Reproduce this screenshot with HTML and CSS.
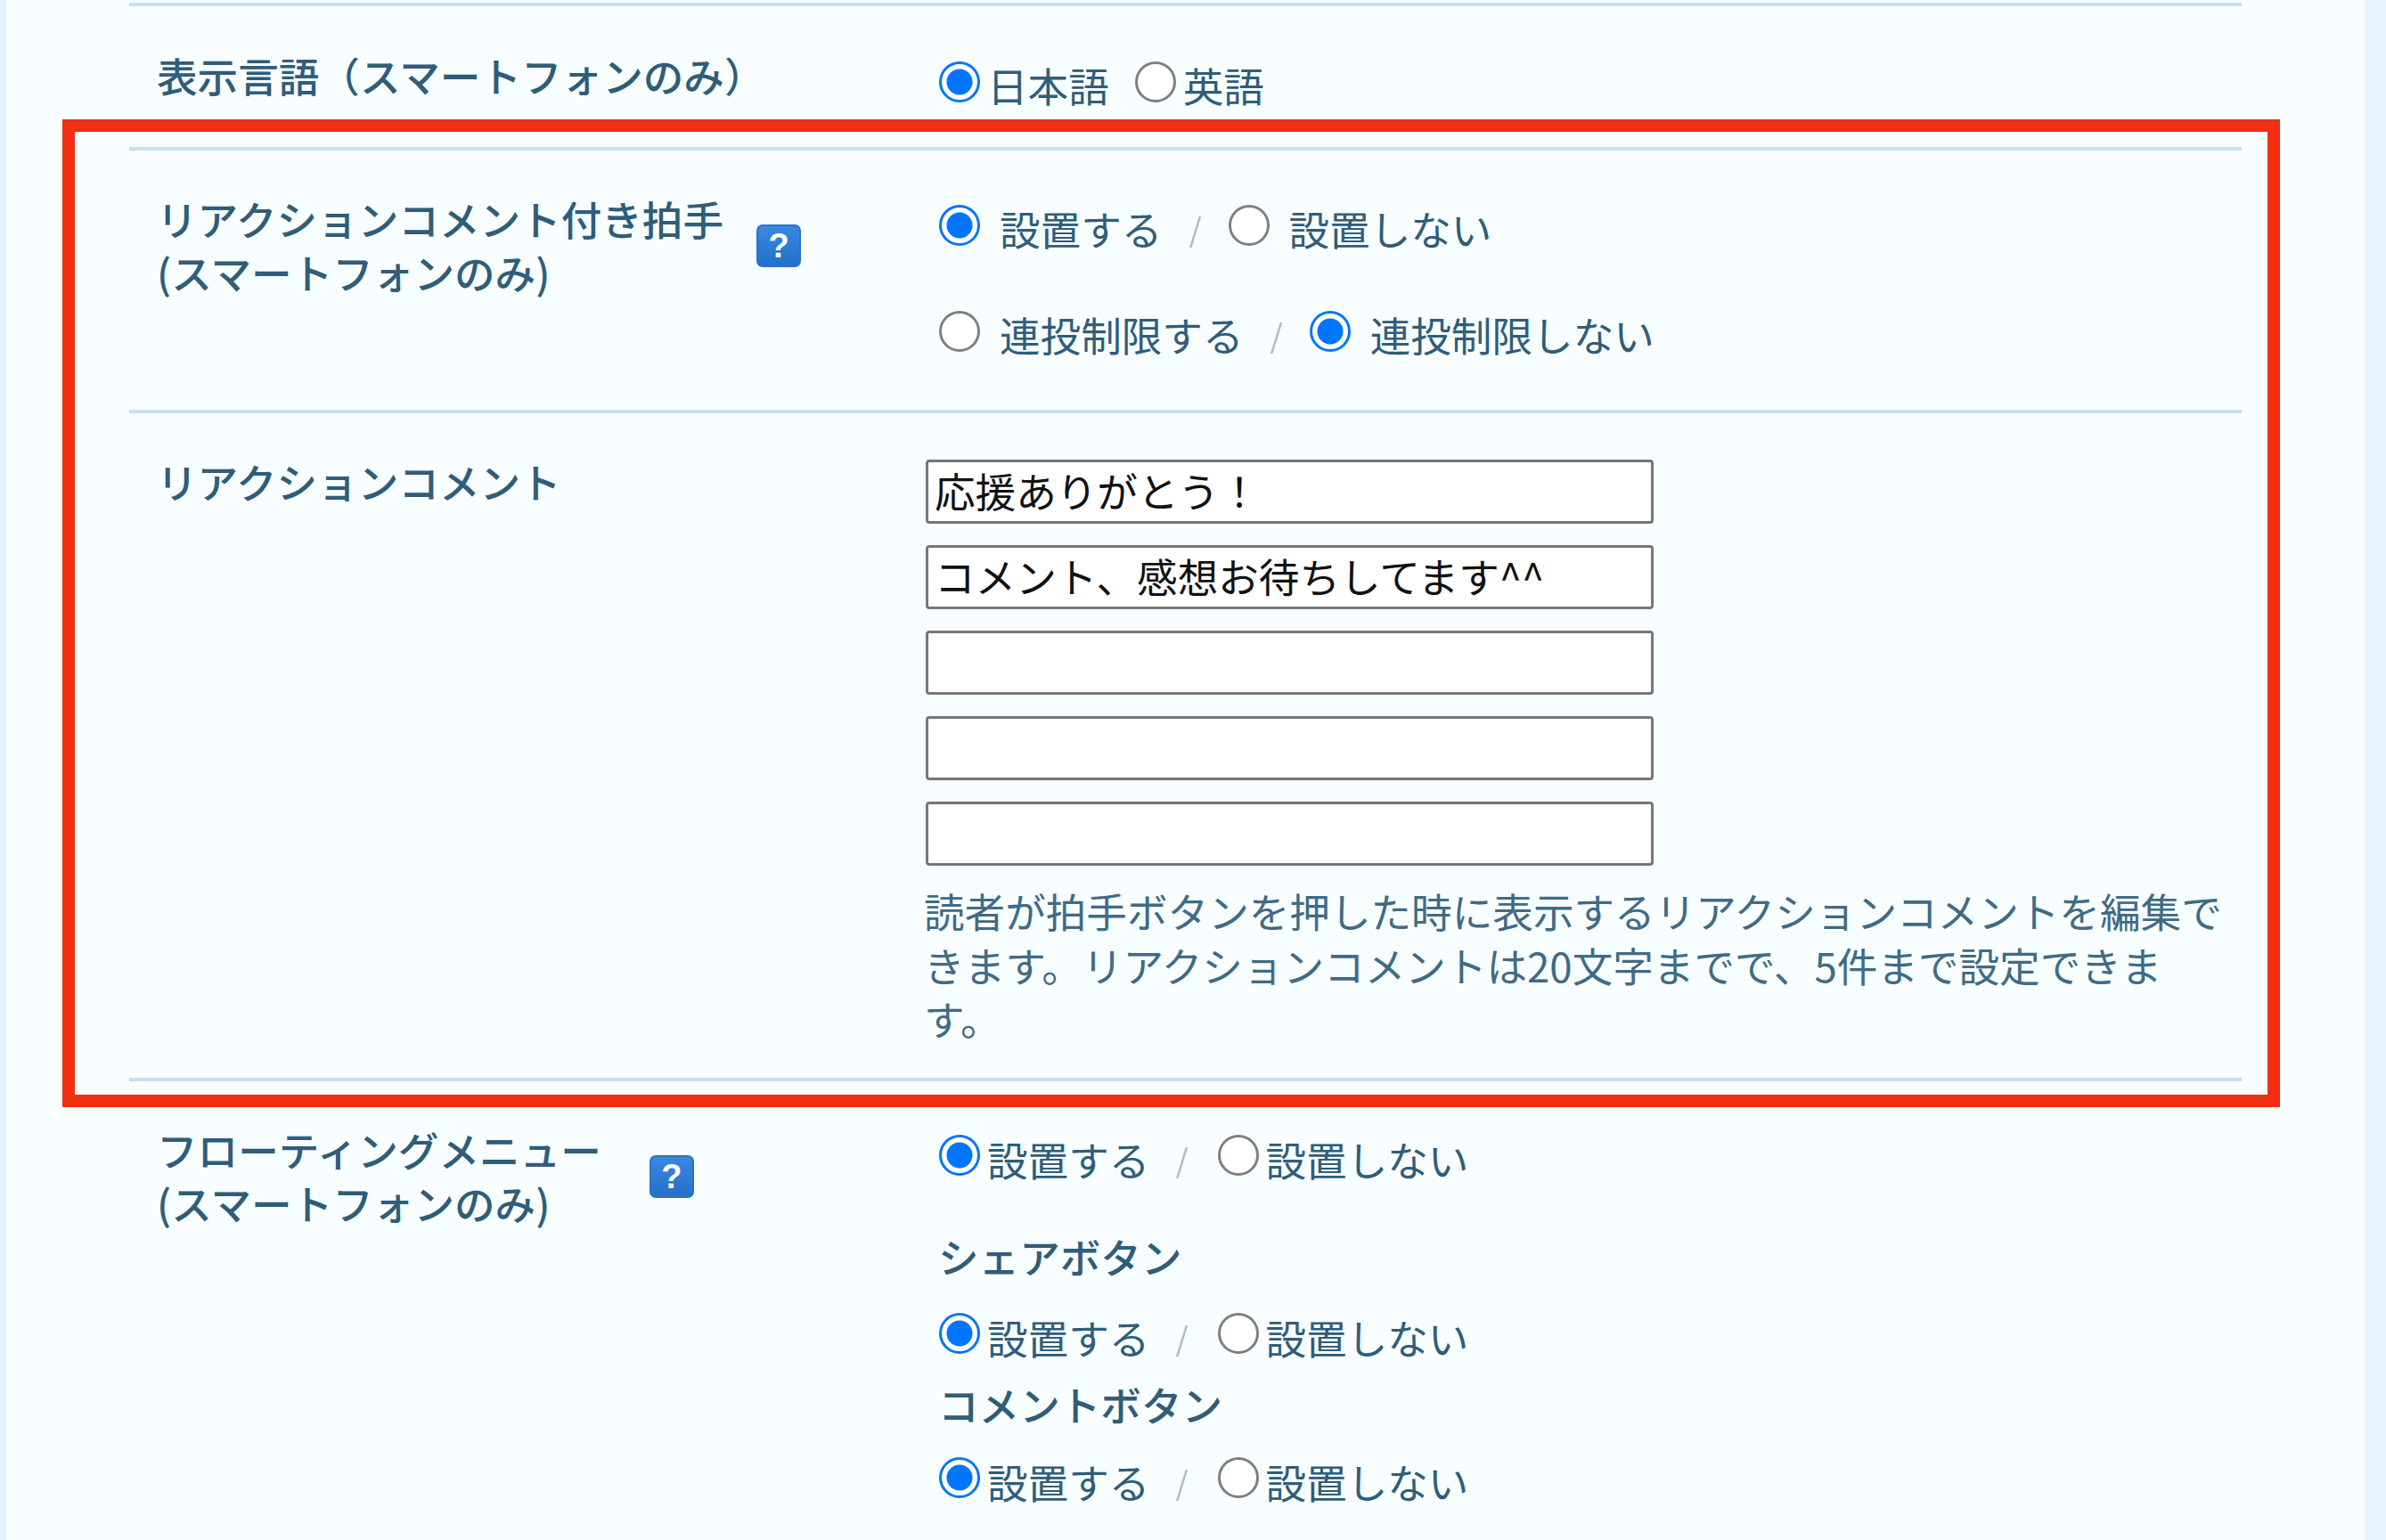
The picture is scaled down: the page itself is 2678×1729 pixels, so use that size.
FILE: index.html
```html
<!DOCTYPE html>
<html lang="ja">

<head>
    <meta charset="UTF-8">
    <title>設定</title>
    <link rel="stylesheet" href="styles.css">
</head>

<body>
    <main class="settings">
        <section class="row row-language">
            <div class="row-label"><span>表示言語（スマートフォンのみ）</span></div>
            <div class="row-options">
                <div class="choice-line">
                    <label class="choice"><input type="radio" name="lang" checked>日本語</label>
                    <label class="choice choice-next"><input type="radio" name="lang">英語</label>
                </div>
            </div>
        </section>

        <section class="row row-reaction">
            <div class="row-label">
                <span>リアクションコメント付き拍手<br>(スマートフォンのみ)</span>
                <span class="help-badge">?</span>
            </div>
            <div class="row-options">
                <div class="choice-line wide">
                    <label class="choice"><input type="radio" name="clap" checked>設置する</label>
                    <span class="slash">/</span>
                    <label class="choice"><input type="radio" name="clap">設置しない</label>
                </div>
                <div class="choice-line wide second">
                    <label class="choice"><input type="radio" name="limit">連投制限する</label>
                    <span class="slash">/</span>
                    <label class="choice"><input type="radio" name="limit" checked>連投制限しない</label>
                </div>
            </div>
        </section>

        <section class="row row-comments">
            <div class="row-label"><span>リアクションコメント</span></div>
            <div class="row-fields">
                <input class="comment-input" type="text" value="応援ありがとう！">
                <input class="comment-input" type="text" value="コメント、感想お待ちしてます^^">
                <input class="comment-input" type="text">
                <input class="comment-input" type="text">
                <input class="comment-input" type="text">
                <p class="help-text">読者が拍手ボタンを押した時に表示するリアクションコメントを編集で<br>きます。リアクションコメントは20文字までで、5件まで設定できま<br>す。</p>
            </div>
        </section>

        <section class="row row-floating">
            <div class="row-label">
                <span>フローティングメニュー<br>(スマートフォンのみ)</span>
                <span class="help-badge">?</span>
            </div>
            <div class="row-options">
                <div class="choice-line">
                    <label class="choice"><input type="radio" name="menu" checked>設置する</label>
                    <span class="slash">/</span>
                    <label class="choice"><input type="radio" name="menu">設置しない</label>
                </div>
                <h4 class="sub-title share-title">シェアボタン</h4>
                <div class="choice-line share-line">
                    <label class="choice"><input type="radio" name="share" checked>設置する</label>
                    <span class="slash">/</span>
                    <label class="choice"><input type="radio" name="share">設置しない</label>
                </div>
                <h4 class="sub-title comment-title">コメントボタン</h4>
                <div class="choice-line comment-line">
                    <label class="choice"><input type="radio" name="comment" checked>設置する</label>
                    <span class="slash">/</span>
                    <label class="choice"><input type="radio" name="comment">設置しない</label>
                </div>
            </div>
        </section>

        <!-- Red highlight over the reaction rows -->
        <div class="highlight"></div>
    </main>
</body>

</html>
```

FILE: styles.css
```css
/* Reset styles */

* {
    margin: 0;
    padding: 0;
    box-sizing: border-box;
}

html,
body {
    height: 100%;
    overflow: hidden;
}

/* Body styling */

body {
    font-family: "Noto Sans CJK JP", "Noto Sans", sans-serif;
    font-size: 45.6px;
    line-height: 60px;
    background-color: #e5f4fd;
    color: #2f5d7a;
}

/* Settings panel */

.settings {
    position: relative;
    height: 100%;
    margin: 0 24px 0 7px;
    padding: 3px 138px 0 138px;
    background-color: #f8fdff;
}

.row {
    display: flex;
    border-top: 4px solid #c5dff0;
}

.row-label {
    display: flex;
    align-items: center;
    align-self: flex-start;
    width: 894px;
    padding-left: 31px;
    padding-top: 46px;
    font-weight: 500;
}

.row-options {
    padding-left: 15px;
}

/* Row heights */

.row-language {
    height: 162px;
}

.row-language .row-label {
    padding-top: 47px;
}

.row-language .row-options {
    padding-top: 58px;
}

.row-language .choice input {
    margin-bottom: 6px;
}

.row-reaction {
    height: 295px;
}

.row-reaction .row-options {
    padding-top: 57px;
}

.row-reaction .choice input {
    margin-bottom: 6px;
}

.row-comments {
    height: 750px;
}

.row-floating .row-options {
    padding-top: 57px;
}

/* Radio lines */

.choice-line {
    display: flex;
    align-items: center;
    height: 60px;
}

.choice {
    display: flex;
    align-items: center;
    gap: 8px;
}

.choice input {
    appearance: none;
    flex: none;
    width: 46px;
    height: 46px;
    margin: 0 0 8px;
    border: 3px solid #7f7f7f;
    border-radius: 50%;
    background: #fff;
}

.choice input:checked {
    border-color: #0075ff;
    background: radial-gradient(circle closest-side, #0075ff 14px, #fff 15px);
}

.choice-next {
    margin-left: 29px;
}

.wide .choice {
    gap: 22px;
}

.second {
    margin-top: 59px;
}

.slash {
    margin: 0 33px 0 29px;
    font-size: 36px;
    color: #a9bcc8;
}

.wide .slash {
    margin: 0 30px;
}

/* Help badge */

.help-badge {
    display: flex;
    align-items: center;
    justify-content: center;
    width: 50px;
    height: 48px;
    margin-left: 37px;
    margin-top: 2px;
    border: 2px solid #2a72c8;
    border-radius: 7px;
    background: linear-gradient(#3a88e0, #2470cc);
    font-family: "Liberation Sans", sans-serif;
    font-size: 38px;
    font-weight: bold;
    line-height: 1;
    color: #fff;
}

.row-floating .help-badge {
    margin-left: 54px;
}

/* Comment inputs */

.row-fields {
    width: 1477px;
    padding-top: 52px;
}

.comment-input {
    display: block;
    width: 817px;
    height: 72px;
    margin-bottom: 24px;
    padding: 0 7px 4px;
    border: 3px solid #767676;
    border-radius: 4px;
    background: #fff;
    font-family: inherit;
    font-size: 45.6px;
    color: #111;
}

.help-text {
    margin: -4px 0 0 -2px;
    line-height: 60.5px;
    color: #3f6b86;
}

/* Sub titles in the floating menu */

.sub-title {
    margin-left: -1px;
    font-weight: 500;
}

.share-title {
    margin-top: 49px;
}

.share-line {
    margin-top: 31px;
}

.comment-title {
    margin-top: 15px;
}

.comment-line {
    margin-top: 27px;
}

/* Highlight frame */

.highlight {
    position: absolute;
    top: 134px;
    left: 63px;
    width: 2489px;
    height: 1109px;
    border: 14px solid #f22f10;
}
```
